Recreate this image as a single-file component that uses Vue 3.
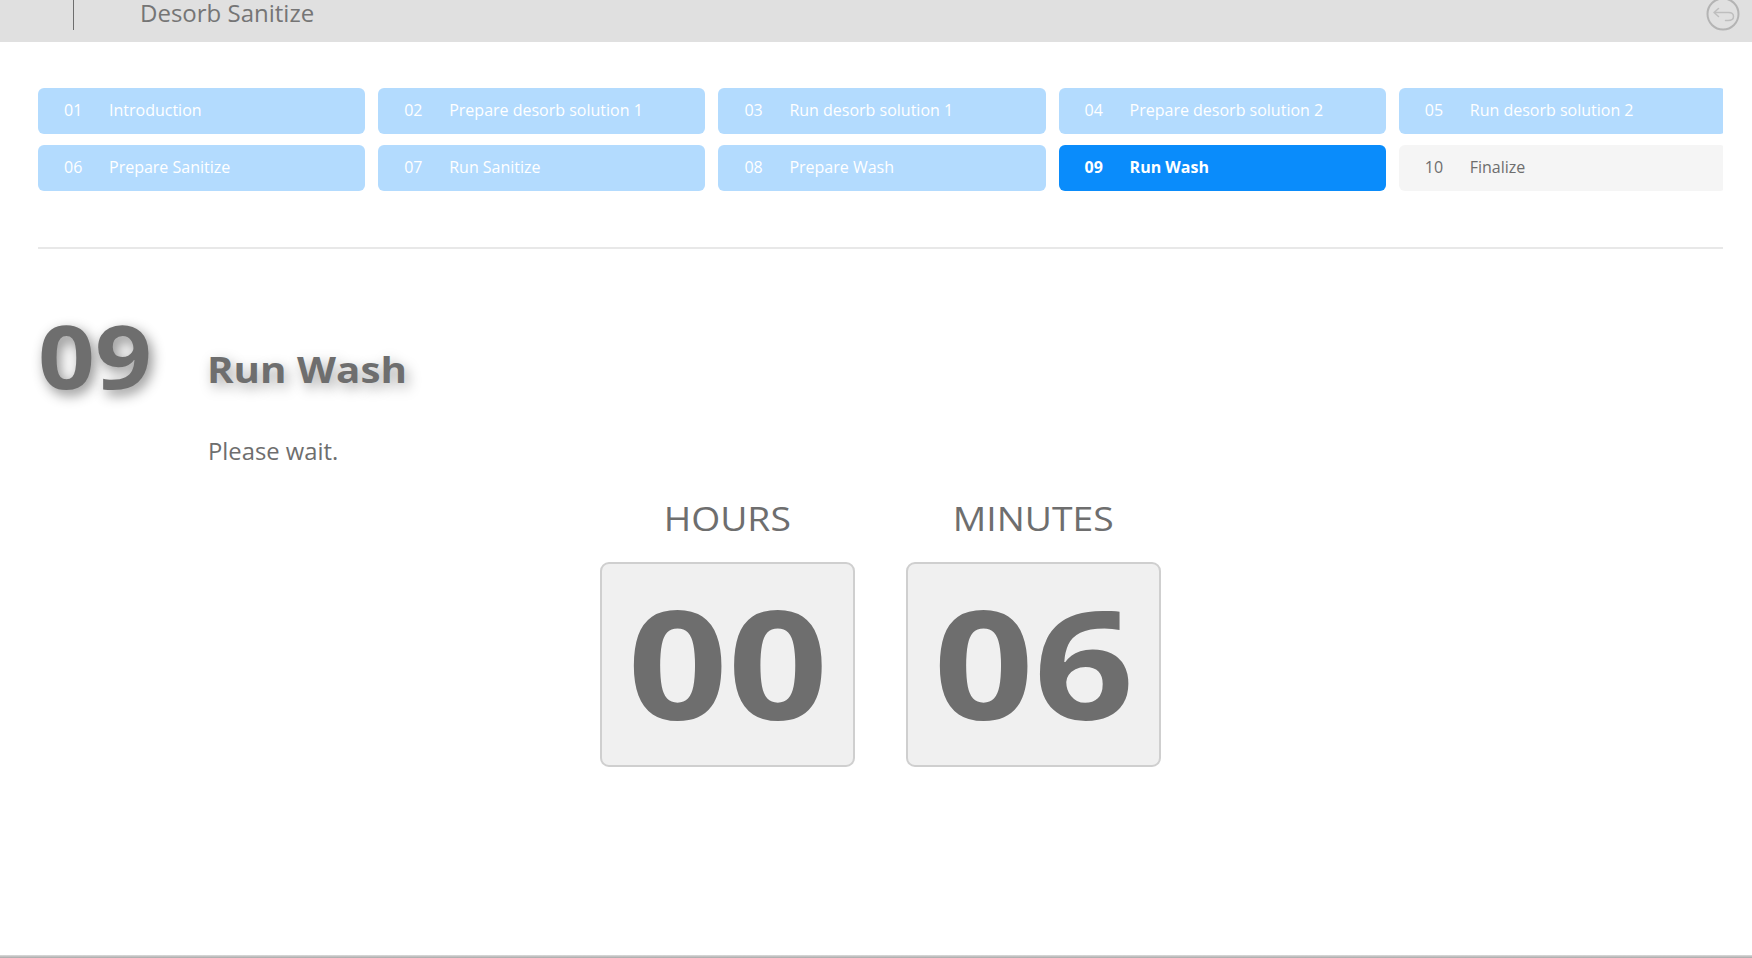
<script setup>
const steps = [
  ['01', 'Introduction', 'done'],
  ['02', 'Prepare desorb solution 1', 'done'],
  ['03', 'Run desorb solution 1', 'done'],
  ['04', 'Prepare desorb solution 2', 'done'],
  ['05', 'Run desorb solution 2', 'done'],
  ['06', 'Prepare Sanitize', 'done'],
  ['07', 'Run Sanitize', 'done'],
  ['08', 'Prepare Wash', 'done'],
  ['09', 'Run Wash', 'active'],
  ['10', 'Finalize', 'todo'],
]
const timers = [
  { label: 'HOURS', value: '00' },
  { label: 'MINUTES', value: '06' },
]
</script>

<template>
  <div class="page">
    <header class="topbar">
      <div class="sep"></div>
      <div class="title">Desorb Sanitize</div>
      <svg class="back" width="34" height="30" viewBox="0 0 34 30" fill="none">
        <circle cx="17" cy="14" r="15.5" stroke="#b4b4b4" stroke-width="2" />
        <path d="M8 12.5H22.5C26 12.5 27.5 14.5 27.5 16.5C27.5 18.8 25.5 20.5 22 20.5H19.5M8 12.5L12.5 8.5M8 12.5L12.5 16.5" stroke="#bebebe" stroke-width="1.5" stroke-linecap="round" stroke-linejoin="round" />
      </svg>
    </header>

    <main class="content">
      <nav class="steps">
        <div v-for="s in steps" :key="s[0]" class="step" :class="s[2]">
          <span class="num">{{ s[0] }}</span>
          <span>{{ s[1] }}</span>
        </div>
      </nav>
      <div class="rule"></div>

      <section class="heading">
        <div class="big"><span class="wide">09</span></div>
        <h1 class="name"><span class="wide">Run Wash</span></h1>
      </section>
      <p class="wait">Please wait.</p>

      <section class="timers">
        <div v-for="t in timers" :key="t.label" class="timer">
          <div class="label"><span class="wide center">{{ t.label }}</span></div>
          <div class="card"><span class="wide center">{{ t.value }}</span></div>
        </div>
      </section>
    </main>
    <div class="footer-line"></div>
  </div>
</template>

<style scoped>
.page {
  width: 1752px;
  height: 958px;
  display: flex;
  flex-direction: column;
  overflow: hidden;
  background: #fff;
  font-family: "Open Sans", "Noto Sans", sans-serif;
  color: #6e6e6e;
}
.wide {
  display: inline-block;
  transform-origin: left center;
}
.wide.center {
  transform-origin: center;
}
.topbar {
  height: 42px;
  flex: none;
  background: #e0e0e0;
  display: flex;
  align-items: flex-start;
  overflow: hidden;
  padding: 0 12px 0 73px;
  box-sizing: border-box;
}
.sep {
  width: 1px;
  height: 30px;
  background: #6e6e6e;
}
.title {
  margin-left: 66px;
  font-size: 24px;
  line-height: 26px;
  color: #757575;
}
.back {
  margin-left: auto;
  overflow: visible;
}
.content {
  flex: 1;
  display: flex;
  flex-direction: column;
  padding: 46px 29px 0 38px;
}
.steps {
  display: grid;
  grid-template-columns: repeat(5, 327.2px);
  gap: 11px 13px;
  overflow: hidden;
}
.step {
  height: 46px;
  border-radius: 6px;
  display: flex;
  align-items: center;
  padding: 0 0 2px 26px;
  box-sizing: border-box;
  font-size: 16px;
  font-weight: 500;
  color: #fff;
  background: #b3dbfe;
}
.num {
  width: 45px;
  flex: none;
}
.step.active {
  background: #0a8cfb;
  font-weight: 700;
}
.step.todo {
  background: #f5f5f5;
  color: #6e6e6e;
}
.rule {
  height: 2px;
  background: #e8e8e8;
  margin-top: 56px;
}
.heading {
  display: flex;
  align-items: flex-end;
  margin-top: 55px;
}
.big {
  width: 169px;
  font-size: 87px;
  line-height: 102px;
  font-weight: 700;
  color: #6e6e6e;
  text-shadow: 3px 5px 12px rgba(0, 0, 0, 0.45);
}
.big .wide {
  transform: scaleX(1.145);
}
.name {
  margin: 0 0 11px;
  font-size: 36px;
  line-height: 50px;
  font-weight: 700;
  color: #6e6e6e;
  text-shadow: 3px 5px 12px rgba(0, 0, 0, 0.35);
}
.name .wide {
  transform: scaleX(1.12);
}
.wait {
  margin: 30px 0 0 170px;
  font-size: 23.8px;
  line-height: 30px;
  color: #6e6e6e;
}
.timers {
  display: flex;
  justify-content: center;
  gap: 51px;
  margin-top: 31px;
}
.timer {
  width: 255px;
  text-align: center;
}
.label {
  font-size: 33px;
  line-height: 44px;
  margin-bottom: 21px;
}
.label .wide {
  transform: scaleX(1.13);
}
.card {
  height: 205px;
  box-sizing: border-box;
  border: 2px solid #cfcfcf;
  border-radius: 9px;
  background: #f0f0f0;
  display: flex;
  align-items: center;
  justify-content: center;
  padding-bottom: 6px;
  font-size: 150px;
  font-weight: 700;
}
.card .wide {
  transform: scaleX(1.17);
}
.footer-line {
  height: 3px;
  flex: none;
  background: linear-gradient(#dcdcdc, #a8a8a8);
}
</style>
